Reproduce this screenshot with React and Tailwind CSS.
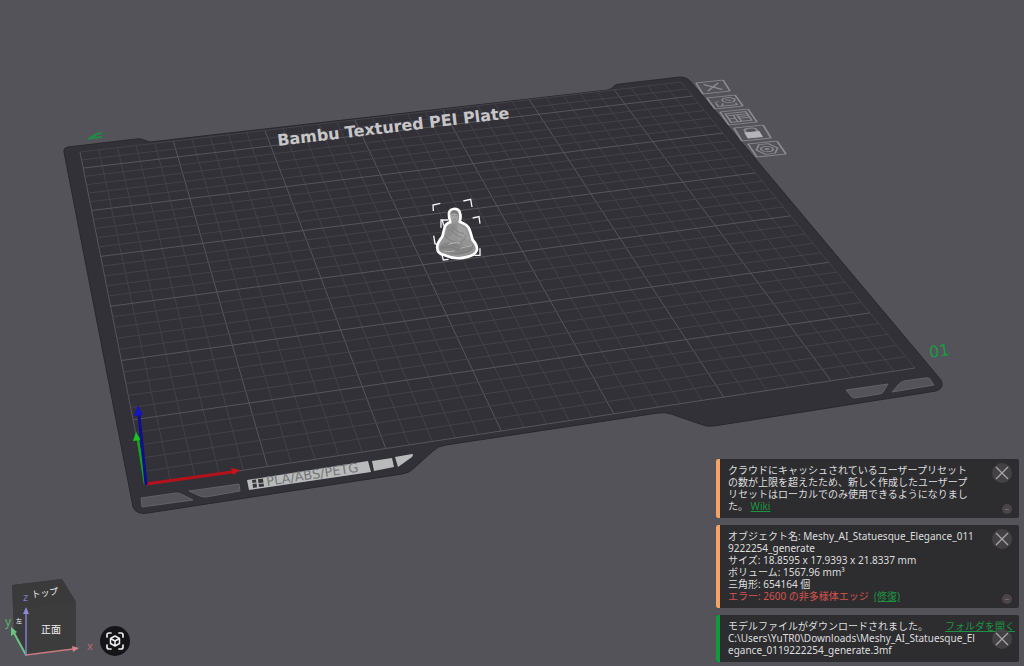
import React from "react";

const COLS = 34;
const ROWS = 32;

// Projects a point of the unit square onto the quad (origin, x end, far corner, y end).
function projector([x0, y0], [x1, y1], [x2, y2], [x3, y3]) {
  const dx1 = x1 - x2, dx2 = x3 - x2, sx = x0 - x1 + x2 - x3;
  const dy1 = y1 - y2, dy2 = y3 - y2, sy = y0 - y1 + y2 - y3;
  const det = dx1 * dy2 - dx2 * dy1;
  const g = (sx * dy2 - dx2 * sy) / det;
  const h = (dx1 * sy - sx * dy1) / det;
  const a = x1 - x0 + g * x1, b = x3 - x0 + h * x3;
  const d = y1 - y0 + g * y1, e = y3 - y0 + h * y3;
  return (u, v) => {
    const w = g * u + h * v + 1;
    return [(a * u + b * v + x0) / w, (d * u + e * v + y0) / w];
  };
}

const bed = projector([146, 485], [915, 368], [681, 82], [80, 152]);

function Grid() {
  const lines = [];
  for (let i = 0; i <= COLS; i++) {
    lines.push({ key: "c" + i, bold: i % 5 === 0, from: bed(i / COLS, 0), to: bed(i / COLS, 1) });
  }
  for (let j = 0; j <= ROWS; j++) {
    lines.push({ key: "r" + j, bold: j % 5 === 0, from: bed(0, j / ROWS), to: bed(1, j / ROWS) });
  }
  return (
    <g>
      {lines.map((l) => (
        <line
          key={l.key}
          x1={l.from[0]}
          y1={l.from[1]}
          x2={l.to[0]}
          y2={l.to[1]}
          stroke={l.bold ? "#56555b" : "#434248"}
          strokeWidth="1"
        />
      ))}
    </g>
  );
}

function PlateIcon({ a, b, d, label, children }) {
  const m = [(b[0] - a[0]) / 30, (b[1] - a[1]) / 30, (d[0] - a[0]) / 30, (d[1] - a[1]) / 30, a[0], a[1]];
  return (
    <g
      role="img"
      aria-label={label}
      transform={`matrix(${m.join(" ")})`}
      fill="none"
      stroke="#8b8a8f"
      strokeWidth="1.8"
    >
      <rect x="0" y="0" width="30" height="30" rx="1" strokeWidth="2" />
      {children}
    </g>
  );
}

function PlateIcons() {
  return (
    <g>
      <PlateIcon a={[696, 83]} b={[723, 80]} d={[703, 94]} label="Delete plate">
        <path d="M7 6 L23 24 M23 6 L7 24" strokeWidth="2.6" />
      </PlateIcon>
      <PlateIcon a={[707, 98]} b={[735, 95]} d={[715, 109]} label="Auto orient">
        <path d="M15 6 L22 4 L27 10 L24 17 L17 18 L13 12 Z M17 9 L22 13 M4 14 L9 12 M5 16 V25 H25 V20 M9 25 L12 18" />
      </PlateIcon>
      <PlateIcon a={[720, 112]} b={[748, 109]} d={[729, 125]} label="Arrange plate">
        <path d="M4 5 H26 V25 H4 Z M4 10 H26 M11 10 V25 M11 17 H4 M15 14 H26 M15 18 H26 M15 10 V25" />
      </PlateIcon>
      <PlateIcon a={[734, 128]} b={[763, 125]} d={[742, 141]} label="Lock plate">
        <path d="M9 13 V8 Q9 4 13 4 H17 Q21 4 21 9 V13" strokeWidth="2.4" />
        <rect x="8" y="13" width="14" height="12" fill="#b5b4b8" stroke="#b5b4b8" />
      </PlateIcon>
      <PlateIcon a={[748, 144]} b={[777, 141]} d={[757, 157]} label="Plate settings">
        <path d="M10 4 H20 L26 15 L20 26 H10 L4 15 Z" />
        <circle cx="15" cy="15" r="6" />
        <circle cx="15" cy="15" r="1.5" />
      </PlateIcon>
    </g>
  );
}

function Model() {
  return (
    <g transform="translate(410 185) scale(.3333)">
      <path
        d="M70 78 L69 60 L91 55 M160 48 L182 43 L186 66 M93 128 V105 H114 M97 105 L101 122 M188 99 L207 95 L210 116 M71 152 L75 176 L86 180 M96 210 L100 225 L116 223 M193 211 L210 211 V190"
        fill="none"
        stroke="#f4f4f4"
        strokeWidth="4"
      />
      <path
        d="M131 72 C121 73 116 80 117 90 C117 101 120 106 121 112 C110 115 104 121 103 131 L97 155 C88 166 80 178 82 190 C82 202 91 208 103 210 C120 218 142 222 161 218 C181 215 196 208 200 197 C204 184 196 174 188 165 C184 152 182 140 176 128 C170 118 160 114 149 110 C151 104 153 98 151 89 C150 78 143 71 131 72 Z"
        fill="#949494"
        stroke="#ffffff"
        strokeWidth="8"
        strokeLinejoin="round"
      />
      <path d="M121 88 Q132 80 144 88 L142 103 L133 111 L124 103 Z" fill="#a4a4a4" />
      <path d="M121 88 Q124 74 134 76 Q146 78 146 90 Q134 80 121 88 Z" fill="#7c7c7c" />
      <path d="M126 92 H132 M136 92 H142 M130 103 H138" stroke="#777777" strokeWidth="2" />
      <path d="M112 124 L130 117 L142 118 L124 152 L106 162 Z" fill="#8b8b8b" />
      <path d="M143 118 L165 128 L180 164 L160 160 L145 166 Z" fill="#9e9e9e" />
      <path d="M88 184 Q110 164 134 178 Q158 190 192 178 Q190 202 164 206 Q120 212 88 194 Z" fill="#858585" />
      <path
        d="M104 152 Q116 168 142 172 M168 150 Q166 170 136 178 M122 133 Q136 152 158 158 M126 124 Q138 142 162 146 M90 190 Q120 180 148 196 M118 207 Q160 210 190 190 M122 176 Q140 186 158 176"
        fill="none"
        stroke="#747474"
        strokeWidth="2"
      />
      <path d="M116 178 Q134 170 150 174 M152 190 Q170 184 186 182 M100 198 Q120 202 134 198" fill="none" stroke="#b4b4b4" strokeWidth="3" />
    </g>
  );
}

function Scene() {
  return (
    <svg
      className="absolute inset-0 h-full w-full"
      viewBox="0 0 1024 666"
      preserveAspectRatio="xMidYMid slice"
      aria-label="Build plate"
    >
      <path
        d="M64 152 Q63 148 68 147 L136 139 Q141 138 144 140 L150 142 L608 90 Q612 89 614 86 Q616 84 620 84 L680 77 Q687 77 691 82 L941 380 Q945 388 936 391 L714 426 Q706 427 700 424 L671 414 Q665 412 658 413 L446 445 Q438 446 433 451 L413 469 Q409 473 402 474 L148 513 Q136 515 133 507 Z"
        fill="#323137"
        stroke="#29282d"
        strokeWidth="1"
      />
      <Grid />
      <g fill="#545359" stroke="#626167" strokeWidth="1">
        <path d="M141 498 L176 493 Q179 493 181 494 L193 500 L142 507 Z" />
        <path d="M189 491 L239 484 L240 491 L206 497 Q202 497 200 496 Z" />
        <path d="M846 390 L888 384 L883 392 Q882 394 879 394 L855 398 Q852 398 851 396 Z" />
        <path d="M892 392 L899 384 Q901 382 904 381 L925 378 Q928 377 930 379 L934 385 Z" />
      </g>
      <g fill="#b9bbbb">
        <path d="M247 480 L368 461 L371 472 L249 490 Z" />
        <path d="M372 461 L392 458 L394 467 L374 471 Z" />
        <path d="M395 457 L412 454 Q414 454 412 457 L398 467 Z" />
      </g>
      <g fill="#35343a" transform="translate(252 480) rotate(-8)">
        <rect x="0" y="0" width="4" height="3" />
        <rect x="6" y="0" width="5" height="4" />
        <rect x="0" y="4" width="4" height="4" />
        <rect x="6" y="5" width="5" height="3" />
      </g>
      <text
        transform="translate(267 486) rotate(-8.8)"
        fill="#747677"
        fontSize="13"
        fontFamily='"DejaVu Sans", sans-serif'
      >
        PLA/ABS/PETG
      </text>
      <text
        transform="translate(278 146) rotate(-6.8)"
        fill="#c6c6c9"
        fontSize="16"
        fontWeight="700"
        fontFamily='"DejaVu Sans", sans-serif'
      >
        Bambu Textured PEI Plate
      </text>
      <text
        transform="translate(930 358) rotate(-8)"
        fill="#1a9a45"
        fontSize="16"
        fontFamily='"DejaVu Sans", sans-serif'
      >
        01
      </text>
      <path d="M88 139 L96 134 L92 138 L102 137 M96 134 L102 133" fill="none" stroke="#1f8a45" strokeWidth="2" />
      <PlateIcons />
      <Model />
      <g strokeLinecap="round">
        <path d="M145 484 L138 440" stroke="#14a31c" strokeWidth="2.5" />
        <path d="M136 432 L133 441 L141 440 Z" fill="#18c322" />
        <path d="M146 484 L232 472" stroke="#b3121a" strokeWidth="3" />
        <path d="M240 470 L231 468 L233 475 Z" fill="#c5141c" />
        <path d="M146 484 L139 415" stroke="#0d0f8e" strokeWidth="3" />
        <path d="M138 405 L134 416 L143 415 Z" fill="#1515c4" />
      </g>
    </svg>
  );
}

function ViewCube() {
  return (
    <svg className="block h-[106px] w-[100px]" viewBox="0 0 100 106" aria-label="View cube" role="img">
      <path d="M12 25 L62 19 L76 42 L76 89 L27 95 L14 70 Z" fill="#3c3c3c" />
      <path d="M12 25 L62 19 L76 42 L25 48 Z" fill="#3a3a3a" />
      <path d="M12 25 L25 48 L27 95 L14 70 Z" fill="#3a3a3a" />
      <g fontFamily='"Noto Sans CJK JP", sans-serif' fill="#f0f0f0">
        <text x="41" y="73" fontSize="10">正面</text>
        <text transform="translate(32 38) rotate(-8)" fontSize="9">トップ</text>
        <text x="16" y="63" fontSize="6">左</text>
      </g>
      <g fontFamily='"Noto Sans", sans-serif' fontSize="11">
        <text x="23" y="41" fill="#7c7cc4">z</text>
        <text x="87" y="90" fill="#c06a70">x</text>
        <text x="5" y="66" fill="#5cae6a" fontSize="12">y</text>
      </g>
      <g strokeWidth="1.5" strokeLinecap="round">
        <path d="M26 95 L14 73" stroke="#6cc281" strokeWidth="2" />
        <path d="M11 67 L11 76 L17 72 Z" fill="#6cc281" />
        <path d="M26 95 L73 89" stroke="#c97a80" />
        <path d="M79 88 L72 86 L73 92 Z" fill="#d08388" />
        <path d="M26 95 L26 53" stroke="#8080cc" />
        <path d="M26 47 L23 54 L29 54 Z" fill="#8a8ad6" />
      </g>
    </svg>
  );
}

function ResetViewButton() {
  return (
    <button
      type="button"
      aria-label="Reset view"
      className="mb-[10px] flex size-[30px] items-center justify-center rounded-full bg-[#151517]"
    >
      <svg viewBox="0 0 20 20" className="size-5" fill="none" stroke="#ececec" strokeWidth="1.7" strokeLinecap="round" strokeLinejoin="round">
        <path d="M2 6 V4 Q2 2 4 2 H6 M14 2 H16 Q18 2 18 4 V6 M18 14 V16 Q18 18 16 18 H14 M6 18 H4 Q2 18 2 16 V14" />
        <path d="M10 5 L14.5 7.5 V12.5 L10 15 L5.5 12.5 V7.5 Z M5.5 7.5 L10 10 L14.5 7.5 M10 10 V15" strokeWidth="1.5" />
      </svg>
    </button>
  );
}

function CloseButton() {
  return (
    <button
      type="button"
      aria-label="閉じる"
      className="flex size-5 items-center justify-center rounded-full bg-[#474448]/90"
    >
      <svg viewBox="0 0 20 20" className="size-5" stroke="#a9a6a8" strokeWidth="1.3">
        <path d="M4 4 L16 16 M16 4 L4 16" />
      </svg>
    </button>
  );
}

function MinimizeButton() {
  return (
    <button
      type="button"
      aria-label="最小化"
      className="flex size-[10px] items-center justify-center rounded-full bg-[#4b4548]"
    >
      <span className="h-px w-1 bg-[#75696c]" />
    </button>
  );
}

function Notice({ accent, collapsible, height, children }) {
  return (
    <section className={`relative flex rounded-[2px] bg-[#2d2d30] text-[10px] leading-3 text-[#dededf] ${height}`}>
      <div className={`w-1 shrink-0 rounded-l-[2px] ${accent}`} />
      <div className="flex-1 whitespace-nowrap py-[5px] pl-2">{children}</div>
      <div
        className={`absolute inset-y-0 right-[7px] flex flex-col items-end ${
          collapsible ? "justify-between pb-1 pt-1" : "justify-center"
        }`}
      >
        <CloseButton />
        {collapsible && <MinimizeButton />}
      </div>
    </section>
  );
}

function NoticeLink({ children }) {
  return (
    <a href="#" className="text-[#1c9340] underline underline-offset-1">
      {children}
    </a>
  );
}

export default function App() {
  return (
    <main className="relative flex min-h-screen items-end justify-between overflow-hidden bg-[#545359] font-['Noto_Sans','Noto_Sans_CJK_JP',sans-serif]">
      <Scene />
      <div className="relative flex items-end">
        <ViewCube />
        <ResetViewButton />
      </div>
      <aside className="relative mb-1 mr-[5px] flex w-[303px] flex-col gap-[7px]">
        <Notice accent="bg-[#f5a468]" collapsible height="min-h-[59px]">
          <p>
            クラウドにキャッシュされているユーザープリセット
            <br />
            の数が上限を超えたため、新しく作成したユーザープ
            <br />
            リセットはローカルでのみ使用できるようになりまし
            <br />
            た。 <NoticeLink>Wiki</NoticeLink>
          </p>
        </Notice>
        <Notice accent="bg-[#f5a468]" collapsible height="min-h-[83px]">
          <p>
            オブジェクト名: Meshy_AI_Statuesque_Elegance_011
            <br />
            9222254_generate
          </p>
          <p>サイズ: 18.8595 x 17.9393 x 21.8337 mm</p>
          <p>ボリューム: 1567.96 mm³</p>
          <p>三角形: 654164 個</p>
          <p className="text-[#d9534c]">
            エラー: 2600 の非多様体エッジ&nbsp; <NoticeLink>(修復)</NoticeLink>
          </p>
        </Notice>
        <Notice accent="bg-[#119a3c]" height="min-h-[47px]">
          <p className="flex justify-between pr-1">
            <span>モデルファイルがダウンロードされました。</span>
            <NoticeLink>フォルダを開く</NoticeLink>
          </p>
          <p>
            C:\Users\YuTR0\Downloads\Meshy_AI_Statuesque_El
            <br />
            egance_0119222254_generate.3mf
          </p>
        </Notice>
      </aside>
    </main>
  );
}
